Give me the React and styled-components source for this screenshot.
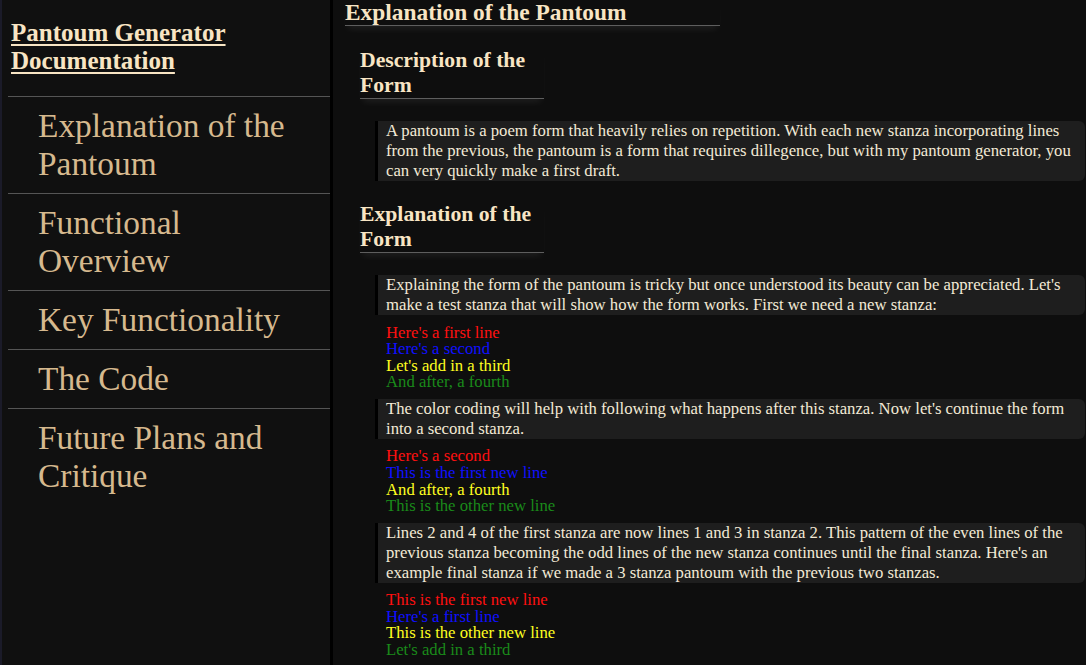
import React from "react";
import styled, { createGlobalStyle } from "styled-components";

const GlobalStyle = createGlobalStyle`
  html, body {
    margin: 0;
    padding: 0;
    height: 100%;
    background: #0e0e0e;
    overflow: hidden;
  }
  body {
    font-family: "Liberation Serif", "Times New Roman", serif;
  }
  #root { height: 100%; }
`;

const Page = styled.div`
  display: flex;
  height: 100vh;
  background: #0e0e0e;
`;

const Sidebar = styled.nav`
  flex: 0 0 322px;
  border-left: 2px solid #1b1b29;
  border-right: 3px solid #000;
  background: #101010;
  padding-left: 6px;
  display: flex;
  flex-direction: column;
`;

const Title = styled.h1`
  margin: 19px 0 21px;
  padding-left: 3px;
  font-size: 25px;
  line-height: 28px;
  font-weight: bold;
  color: #f8e5c4;
  text-decoration: underline;
  text-decoration-thickness: 2px;
  text-underline-offset: 3px;
`;

const NavList = styled.ul`
  list-style: none;
  margin: 0;
  padding: 0;
`;

const NavItem = styled.li`
  border-top: 1px solid #555;
  padding: 10px 20px 10px 30px;
  font-size: 33.4px;
  line-height: 38px;
  color: #d6b98e;
`;

const Main = styled.main`
  flex: 1;
  padding-left: 12px;
  overflow: hidden;
`;

const H2 = styled.h2`
  margin: 0;
  width: 375px;
  font-size: 23.4px;
  line-height: 25px;
  font-weight: bold;
  color: #f8e5c4;
  border-bottom: 1px solid #5e5e5e;
  box-shadow: 0 6px 7px -3px rgba(255, 255, 255, 0.07);
`;

const Section = styled.section`
  margin-left: 15px;
`;

const H3 = styled.h3`
  margin: 21.5px 0 22px;
  width: 184px;
  font-size: 21.7px;
  line-height: 25px;
  font-weight: bold;
  color: #f8e5c4;
  border-bottom: 1px solid #5e5e5e;
  box-shadow: 0 6px 7px -3px rgba(255, 255, 255, 0.07);
`;

const Para = styled.p`
  margin: 8px 1px 8px 15px;
  padding: 0 4px 0 8px;
  background: #1e1e1e;
  border-left: 3px solid #000;
  border-radius: 0 6px 6px 0;
  font-size: 16.7px;
  line-height: 20px;
  color: #f3ead6;
`;

const Poem = styled.div`
  margin: 9.5px 0 8px 15px;
  padding-left: 11px;
  display: flex;
  flex-direction: column;
`;

const Line = styled.span`
  font-size: 16.7px;
  line-height: 16.6px;
  color: ${(p) => p.$color};
`;

const colors = ["#ff1010", "#1010ff", "#ffff20", "#1a8a1a"];

const PoemBlock = ({ lines }) => (
  <Poem>
    {lines.map((l, i) => (
      <Line key={i} $color={colors[i]}>
        {l}
      </Line>
    ))}
  </Poem>
);

export default function App() {
  return (
    <>
      <GlobalStyle />
      <Page>
        <Sidebar>
          <Title>
            Pantoum Generator
            <br />
            Documentation
          </Title>
          <NavList>
            <NavItem>Explanation of the Pantoum</NavItem>
            <NavItem>Functional Overview</NavItem>
            <NavItem>Key Functionality</NavItem>
            <NavItem>The Code</NavItem>
            <NavItem>Future Plans and Critique</NavItem>
          </NavList>
        </Sidebar>
        <Main>
          <H2>Explanation of the Pantoum</H2>
          <Section>
            <H3>Description of the Form</H3>
            <Para>
              A pantoum is a poem form that heavily relies on repetition. With
              each new stanza incorporating lines from the previous, the pantoum
              is a form that requires dillegence, but with my pantoum generator,
              you can very quickly make a first draft.
            </Para>
            <H3>Explanation of the Form</H3>
            <Para>
              Explaining the form of the pantoum is tricky but once understood
              its beauty can be appreciated. Let's make a test stanza that will
              show how the form works. First we need a new stanza:
            </Para>
            <PoemBlock
              lines={[
                "Here's a first line",
                "Here's a second",
                "Let's add in a third",
                "And after, a fourth",
              ]}
            />
            <Para>
              The color coding will help with following what happens after this
              stanza. Now let's continue the form into a second stanza.
            </Para>
            <PoemBlock
              lines={[
                "Here's a second",
                "This is the first new line",
                "And after, a fourth",
                "This is the other new line",
              ]}
            />
            <Para>
              Lines 2 and 4 of the first stanza are now lines 1 and 3 in stanza
              2. This pattern of the even lines of the previous stanza becoming
              the odd lines of the new stanza continues until the final stanza.
              Here's an example final stanza if we made a 3 stanza pantoum with
              the previous two stanzas.
            </Para>
            <PoemBlock
              lines={[
                "This is the first new line",
                "Here's a first line",
                "This is the other new line",
                "Let's add in a third",
              ]}
            />
          </Section>
        </Main>
      </Page>
    </>
  );
}
